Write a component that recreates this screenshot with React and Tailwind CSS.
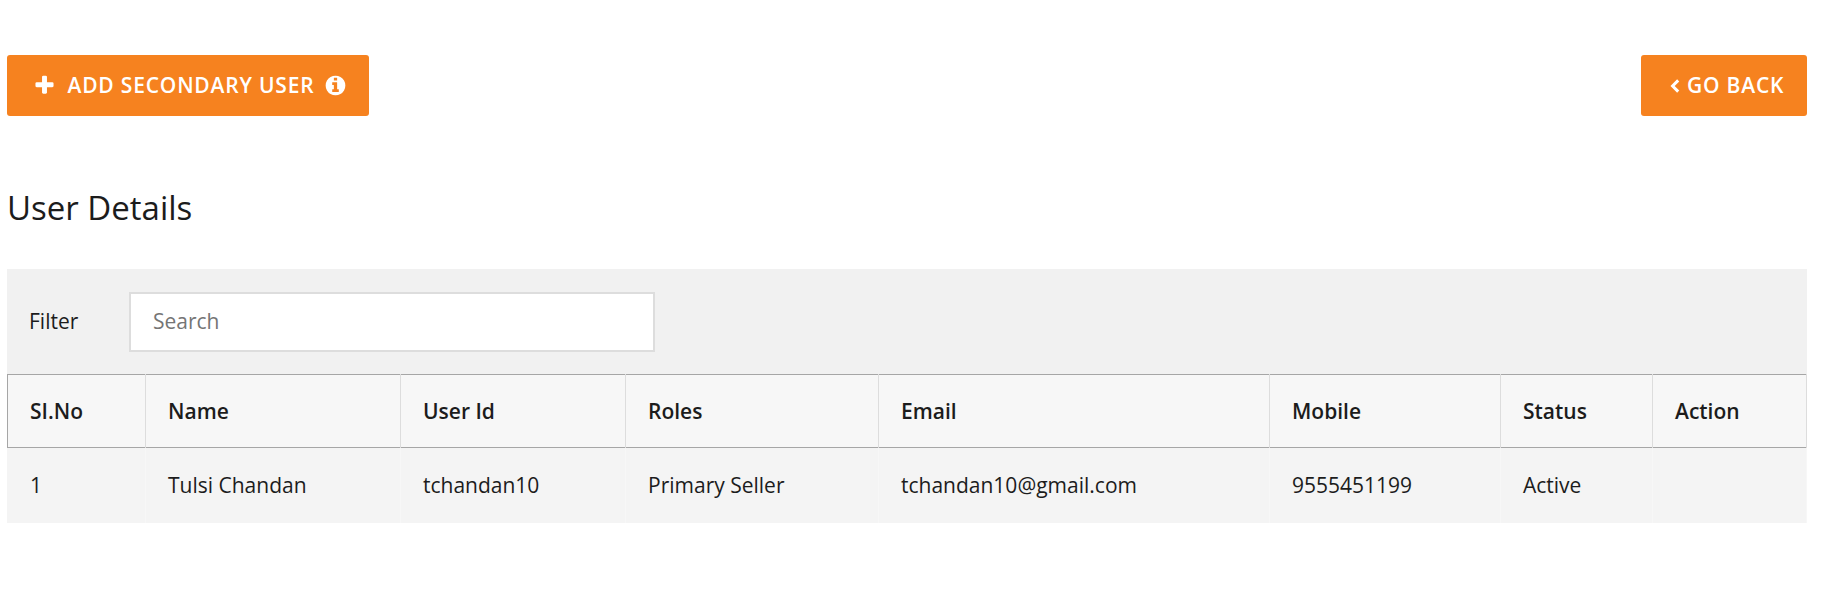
const columns = [
  { label: 'SI.No', value: '1', width: 'w-[139px]' },
  { label: 'Name', value: 'Tulsi Chandan', width: 'w-[255px]' },
  { label: 'User Id', value: 'tchandan10', width: 'w-[225px]' },
  { label: 'Roles', value: 'Primary Seller', width: 'w-[253px]' },
  { label: 'Email', value: 'tchandan10@gmail.com', width: 'w-[391px]' },
  { label: 'Mobile', value: '9555451199', width: 'w-[231px]' },
  { label: 'Status', value: 'Active', width: 'w-[152px]' },
  { label: 'Action', value: '', width: 'w-[154px]' },
];

function PlusIcon() {
  return (
    <svg className="size-[23px] shrink-0" viewBox="0 0 1792 1792" fill="currentColor">
      <path d="M1600 736v192q0 40-28 68t-68 28h-416v416q0 40-28 68t-68 28h-192q-40 0-68-28t-28-68v-416h-416q-40 0-68-28t-28-68v-192q0-40 28-68t68-28h416v-416q0-40 28-68t68-28h192q40 0 68 28t28 68v416h416q40 0 68 28t28 68z" />
    </svg>
  );
}

function InfoIcon() {
  return (
    <svg className="size-[23px] shrink-0" viewBox="0 0 1792 1792" fill="currentColor">
      <path d="M1152 1376v-160q0-14-9-23t-23-9h-96v-512q0-14-9-23t-23-9h-320q-14 0-23 9t-9 23v160q0 14 9 23t23 9h96v320h-96q-14 0-23 9t-9 23v160q0 14 9 23t23 9h448q14 0 23-9t9-23zm-128-896v-160q0-14-9-23t-23-9h-192q-14 0-23 9t-9 23v160q0 14 9 23t23 9h192q14 0 23-9t9-23zm640 416q0 209-103 385.5t-279.5 279.5-385.5 103-385.5-103-279.5-279.5-103-385.5 103-385.5 279.5-279.5 385.5-103 385.5 103 279.5 279.5 103 385.5z" />
    </svg>
  );
}

function AngleLeftIcon() {
  return (
    <svg className="mt-px h-[14px] w-[10px] shrink-0" viewBox="0 0 10 14" fill="none" stroke="currentColor" strokeWidth="3">
      <path d="M8.2 1.4 2.6 7l5.6 5.6" />
    </svg>
  );
}

export default function App() {
  return (
    <main className="h-[604px] w-[1837px] overflow-hidden bg-white pl-[7px] pr-[30px] pt-[55px] font-['Open_Sans',sans-serif] text-[21px] text-[#1c1c1c]">
      <div className="flex justify-between font-semibold tracking-[0.8px] text-white">
        <button className="flex h-[61px] w-[362px] items-center rounded-[3px] bg-[#f6821f] pl-[26px]">
          <PlusIcon />
          <span className="ml-[11.5px] whitespace-nowrap pt-px">ADD SECONDARY USER</span>
          <span className="ml-[10px] flex"><InfoIcon /></span>
        </button>
        <button className="flex h-[61px] w-[166px] items-center rounded-[3px] bg-[#f6821f] pl-[29px]">
          <AngleLeftIcon />
          <span className="ml-[7px] whitespace-nowrap pt-px">GO BACK</span>
        </button>
      </div>

      <h1 className="mt-[68px] h-[85px] text-[33px] leading-[48px]">User Details</h1>

      <div className="flex h-[105px] items-center bg-[#f1f1f1] pl-[22px]">
        <label htmlFor="filter" className="w-[100px]">Filter</label>
        <input
          id="filter"
          placeholder="Search"
          className="h-[60px] w-[526px] border-2 border-[#ddd] bg-white px-[22px] pb-[2px] placeholder:text-[#757575]"
        />
      </div>

      <div className="flex h-[74px] bg-[#f7f7f7] font-semibold">
        {columns.map((c, i) => (
          <div key={c.label} className={`${c.width} ${i === 0 ? 'border-l border-l-[#a6a6a6]' : ''} flex border-r border-r-[#ddd]`}>
            <div className="flex flex-1 items-center border-y border-[#a6a6a6] pl-[22px] pt-[2px]">
              {c.label}
            </div>
          </div>
        ))}
      </div>
      <div className="flex h-[75px] bg-[#f4f4f4]">
        {columns.map((c, i) => (
          <div key={c.label} className={`${c.width} ${i === 0 ? 'pl-[23px]' : 'pl-[22px]'} flex items-center border-r border-[#f7f7f7]`}>
            {c.value}
          </div>
        ))}
      </div>
    </main>
  );
}
